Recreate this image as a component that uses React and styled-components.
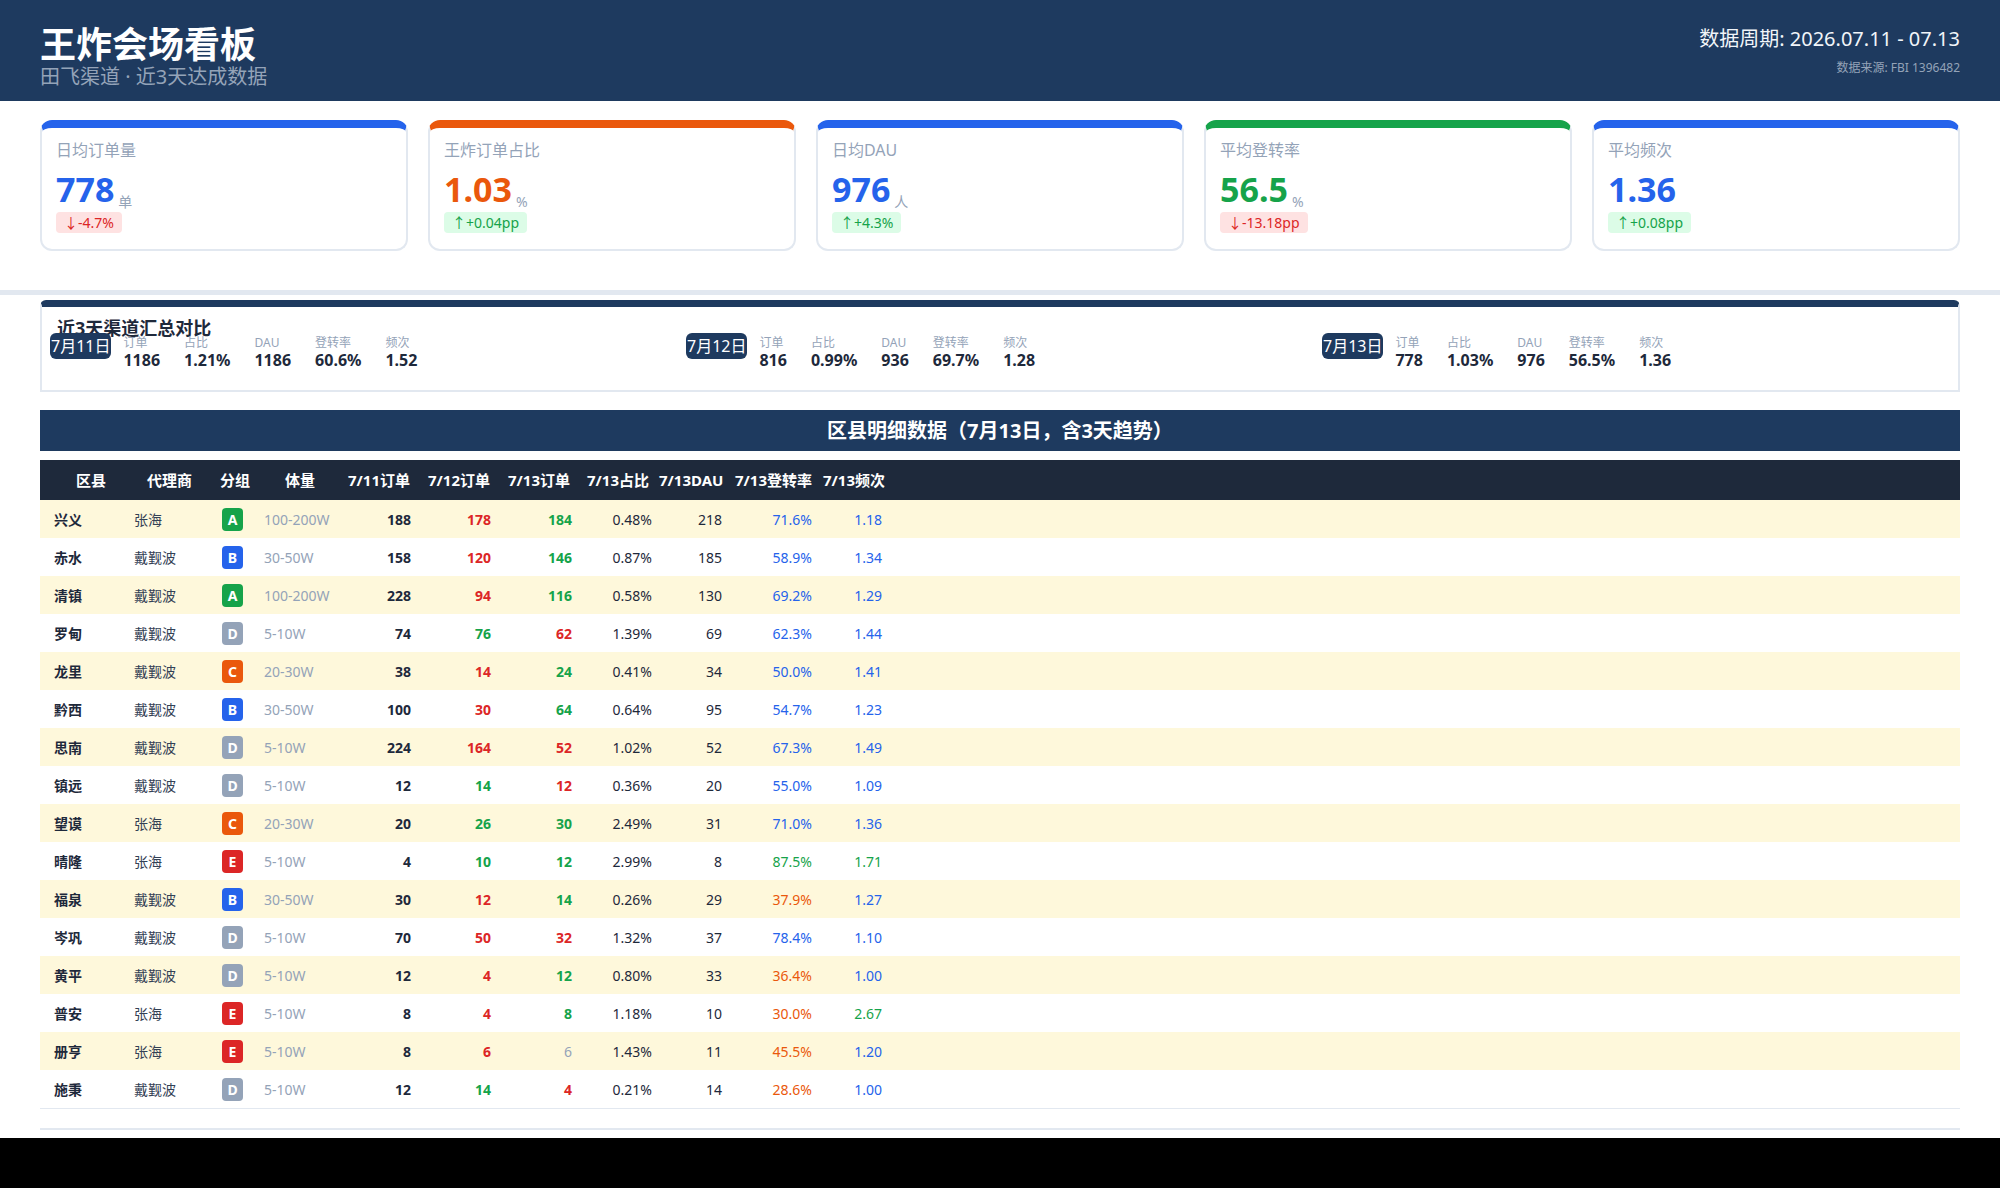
import React from "react";
import styled, { createGlobalStyle } from "styled-components";

const GlobalStyle = createGlobalStyle`
  * { box-sizing: border-box; }
  html { background: #000; }
  body {
    margin: 0;
    font-family: "Noto Sans", "Noto Sans CJK SC", sans-serif;
    color: #1e293b;
  }
`;

const kpis = [
  { label: "日均订单量", value: "778", unit: "单", change: "↓-4.7%", up: false, accent: "#2563eb" },
  { label: "王炸订单占比", value: "1.03", unit: "%", change: "↑+0.04pp", up: true, accent: "#ea580c" },
  { label: "日均DAU", value: "976", unit: "人", change: "↑+4.3%", up: true, accent: "#2563eb" },
  { label: "平均登转率", value: "56.5", unit: "%", change: "↓-13.18pp", up: false, accent: "#16a34a" },
  { label: "平均频次", value: "1.36", unit: "", change: "↑+0.08pp", up: true, accent: "#2563eb" },
];

const days = [
  { date: "7月11日", stats: ["1186", "1.21%", "1186", "60.6%", "1.52"] },
  { date: "7月12日", stats: ["816", "0.99%", "936", "69.7%", "1.28"] },
  { date: "7月13日", stats: ["778", "1.03%", "976", "56.5%", "1.36"] },
];
const statLabels = ["订单", "占比", "DAU", "登转率", "频次"];

const heads = ["区县", "代理商", "分组", "体量", "7/11订单", "7/12订单", "7/13订单", "7/13占比", "7/13DAU", "7/13登转率", "7/13频次"];

const rows = [
  ["兴义", "张海", "A", "100-200W", 188, 178, 184, "0.48%", 218, 71.6, "1.18"],
  ["赤水", "戴觐波", "B", "30-50W", 158, 120, 146, "0.87%", 185, 58.9, "1.34"],
  ["清镇", "戴觐波", "A", "100-200W", 228, 94, 116, "0.58%", 130, 69.2, "1.29"],
  ["罗甸", "戴觐波", "D", "5-10W", 74, 76, 62, "1.39%", 69, 62.3, "1.44"],
  ["龙里", "戴觐波", "C", "20-30W", 38, 14, 24, "0.41%", 34, 50.0, "1.41"],
  ["黔西", "戴觐波", "B", "30-50W", 100, 30, 64, "0.64%", 95, 54.7, "1.23"],
  ["思南", "戴觐波", "D", "5-10W", 224, 164, 52, "1.02%", 52, 67.3, "1.49"],
  ["镇远", "戴觐波", "D", "5-10W", 12, 14, 12, "0.36%", 20, 55.0, "1.09"],
  ["望谟", "张海", "C", "20-30W", 20, 26, 30, "2.49%", 31, 71.0, "1.36"],
  ["晴隆", "张海", "E", "5-10W", 4, 10, 12, "2.99%", 8, 87.5, "1.71"],
  ["福泉", "戴觐波", "B", "30-50W", 30, 12, 14, "0.26%", 29, 37.9, "1.27"],
  ["岑巩", "戴觐波", "D", "5-10W", 70, 50, 32, "1.32%", 37, 78.4, "1.10"],
  ["黄平", "戴觐波", "D", "5-10W", 12, 4, 12, "0.80%", 33, 36.4, "1.00"],
  ["普安", "张海", "E", "5-10W", 8, 4, 8, "1.18%", 10, 30.0, "2.67"],
  ["册亨", "张海", "E", "5-10W", 8, 6, 6, "1.43%", 11, 45.5, "1.20"],
  ["施秉", "戴觐波", "D", "5-10W", 12, 14, 4, "0.21%", 14, 28.6, "1.00"],
];

const groupColors = { A: "#16a34a", B: "#2563eb", C: "#ea580c", D: "#94a3b8", E: "#dc2626" };

const trendColor = (now, before) =>
  now > before ? "#16a34a" : now < before ? "#dc2626" : "#94a3b8";
const convColor = (v) => (v >= 80 ? "#16a34a" : v >= 50 ? "#2563eb" : "#ea580c");
const freqColor = (v) => (parseFloat(v) >= 1.5 ? "#16a34a" : "#2563eb");

export default function App() {
  return (
    <Page>
      <GlobalStyle />
      <Header>
        <div>
          <Title>王炸会场看板</Title>
          <Subtitle>田飞渠道 · 近3天达成数据</Subtitle>
        </div>
        <div>
          <Period>数据周期: 2026.07.11 - 07.13</Period>
          <Source>数据来源: FBI 1396482</Source>
        </div>
      </Header>

      <KpiRow>
        {kpis.map((k) => (
          <KpiCard key={k.label} $accent={k.accent}>
            <KpiLabel>{k.label}</KpiLabel>
            <ValueRow>
              <KpiValue $accent={k.accent}>{k.value}</KpiValue>
              {k.unit && <KpiUnit>{k.unit}</KpiUnit>}
            </ValueRow>
            <Change $up={k.up}>{k.change}</Change>
          </KpiCard>
        ))}
      </KpiRow>

      <Main>
        <SummaryBox>
          <SummaryTitle>近3天渠道汇总对比</SummaryTitle>
          <DayGrid>
            {days.map((d) => (
              <DayGroup key={d.date}>
                <DateTag>{d.date}</DateTag>
                <Stats>
                  {d.stats.map((s, i) => (
                    <Stat key={statLabels[i]}>
                      <StatLabel>{statLabels[i]}</StatLabel>
                      <StatValue>{s}</StatValue>
                    </Stat>
                  ))}
                </Stats>
              </DayGroup>
            ))}
          </DayGrid>
        </SummaryBox>

        <DetailTitle>区县明细数据（7月13日，含3天趋势）</DetailTitle>

        <Table>
          <HeadRow>
            {heads.map((h) => (
              <HeadCell key={h}>{h}</HeadCell>
            ))}
          </HeadRow>
          <Body>
            {rows.map((r, i) => (
              <Row key={r[0]} $striped={i % 2 === 0}>
                <Cell $bold>{r[0]}</Cell>
                <Cell $color="#334155">{r[1]}</Cell>
                <Cell>
                  <GroupTag $bg={groupColors[r[2]]}>{r[2]}</GroupTag>
                </Cell>
                <Cell $color="#94a3b8">{r[3]}</Cell>
                <NumCell $bold>{r[4]}</NumCell>
                <NumCell $bold $color={trendColor(r[5], r[4])}>{r[5]}</NumCell>
                <NumCell $bold={r[6] !== r[5]} $color={trendColor(r[6], r[5])}>{r[6]}</NumCell>
                <NumCell>{r[7]}</NumCell>
                <NumCell>{r[8]}</NumCell>
                <NumCell $color={convColor(r[9])}>{r[9].toFixed(1)}%</NumCell>
                <NumCell $color={freqColor(r[10])}>{r[10]}</NumCell>
              </Row>
            ))}
          </Body>
        </Table>

        <Footer />
      </Main>
    </Page>
  );
}

const Page = styled.div`
  background: #fff;
`;

const Header = styled.header`
  height: 101px;
  padding: 27px 40px 0;
  background: #1e3a5f;
  display: flex;
  justify-content: space-between;
  align-items: flex-start;
`;

const Title = styled.h1`
  margin: 0;
  font-size: 36px;
  line-height: 36px;
  font-weight: 700;
  color: #fff;
`;

const Subtitle = styled.div`
  margin-top: 4px;
  font-size: 20px;
  line-height: 20px;
  color: #94a3b8;
`;

const Period = styled.div`
  margin-top: -2px;
  font-size: 20px;
  line-height: 28px;
  color: #f1f5f9;
  text-align: right;
`;

const Source = styled.div`
  margin-top: 7px;
  font-size: 12px;
  line-height: 16px;
  color: #94a3b8;
  text-align: right;
`;

const KpiRow = styled.section`
  display: grid;
  grid-template-columns: repeat(5, 1fr);
  gap: 20px;
  padding: 19px 40px 39px;
  border-bottom: 5px solid #e2e8f0;
`;

const KpiCard = styled.div`
  border: 2px solid #e2e8f0;
  border-top: 8px solid ${(p) => p.$accent};
  border-radius: 12px;
  padding: 11px 14px 16px;
`;

const KpiLabel = styled.div`
  font-size: 16px;
  line-height: 22px;
  color: #94a3b8;
`;

const ValueRow = styled.div`
  display: flex;
  align-items: flex-end;
  gap: 4px;
  margin-top: 8px;
`;

const KpiValue = styled.span`
  font-size: 34px;
  line-height: 40px;
  font-weight: 700;
  color: ${(p) => p.$accent};
`;

const KpiUnit = styled.span`
  font-size: 14px;
  line-height: 14px;
  color: #94a3b8;
`;

const Change = styled.span`
  display: inline-block;
  margin-top: 3px;
  padding: 2px 8px;
  border-radius: 4px;
  font-size: 14px;
  line-height: 17px;
  background: ${(p) => (p.$up ? "#dcfce7" : "#fee2e2")};
  color: ${(p) => (p.$up ? "#16a34a" : "#dc2626")};
`;

const Main = styled.main`
  padding: 5px 40px 0;
`;

const SummaryBox = styled.section`
  border: 2px solid #e2e8f0;
  border-top: 7px solid #1e3a5f;
  border-radius: 6px 6px 0 0;
  padding: 12px 0 22px 8px;
`;

const SummaryTitle = styled.h3`
  margin: 0 0 -4px 7px;
  font-size: 18px;
  line-height: 18px;
  font-weight: 700;
  color: #1e293b;
`;

const DayGrid = styled.div`
  display: grid;
  grid-template-columns: repeat(3, 1fr);
`;

const DayGroup = styled.div`
  display: flex;
  align-items: flex-start;
  gap: 12px;
`;

const DateTag = styled.span`
  padding: 5px 1px;
  border-radius: 6px;
  background: #1e3a5f;
  color: #fff;
  font-size: 16px;
  line-height: 16px;
  white-space: nowrap;
`;

const Stats = styled.div`
  display: flex;
  gap: 24px;
  margin-top: 4px;
`;

const Stat = styled.div`
  display: flex;
  flex-direction: column;
  gap: 3px;
`;

const StatLabel = styled.span`
  font-size: 12px;
  line-height: 12px;
  color: #94a3b8;
`;

const StatValue = styled.span`
  font-size: 16px;
  line-height: 16px;
  font-weight: 700;
  color: #1e293b;
`;

const DetailTitle = styled.h2`
  margin: 18px 0 0;
  height: 41px;
  background: #1e3a5f;
  color: #fff;
  font-size: 20px;
  line-height: 41px;
  font-weight: 700;
  text-align: center;
`;

const Table = styled.div`
  margin-top: 9px;
`;

const HeadRow = styled.div`
  display: grid;
  grid-template-columns: 71px 73px 65px 63px 80px 80px 79px 72px 76px 88px 70px 1fr;
  height: 40px;
  padding-left: 36px;
  background: #1e293b;
`;

const HeadCell = styled.div`
  font-size: 15px;
  line-height: 40px;
  font-weight: 700;
  color: #fff;
  white-space: nowrap;
`;

const Body = styled.div`
  border-bottom: 1px solid #e2e8f0;
`;

const Row = styled.div`
  display: grid;
  grid-template-columns: 80px 88px 42px 83px 64px 80px 81px 80px 70px 90px 70px 1fr;
  align-items: center;
  height: 38px;
  padding-left: 14px;
  background: ${(p) => (p.$striped ? "#fef8db" : "#fff")};
`;

const Cell = styled.div`
  display: flex;
  align-items: center;
  font-size: 14px;
  font-weight: ${(p) => (p.$bold ? 700 : 400)};
  color: ${(p) => p.$color || "#1e293b"};
  white-space: nowrap;
`;

const NumCell = styled(Cell)`
  justify-content: flex-end;
`;

const GroupTag = styled.span`
  width: 21px;
  height: 23px;
  border-radius: 4px;
  background: ${(p) => p.$bg};
  color: #fff;
  font-size: 14px;
  font-weight: 700;
  line-height: 23px;
  text-align: center;
`;

const Footer = styled.footer`
  margin-top: 19px;
  height: 10px;
  border-top: 2px solid #e2e8f0;
`;
